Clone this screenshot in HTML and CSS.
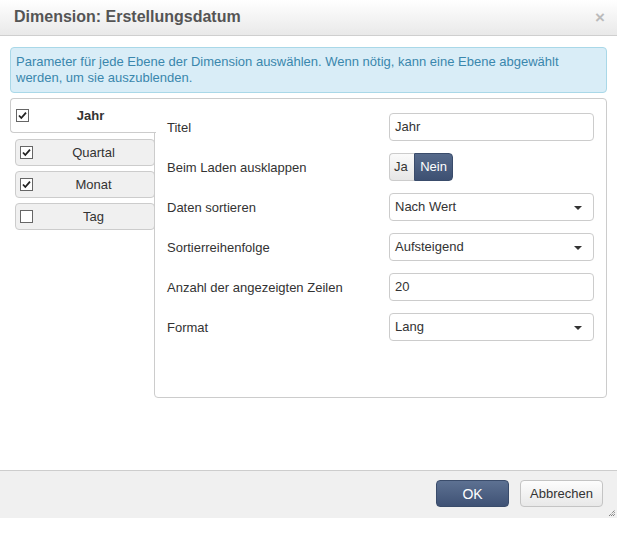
FILE: index.html
```html
<!DOCTYPE html>
<html lang="de">
<head>
<meta charset="utf-8">
<title>Dimension: Erstellungsdatum</title>
<link rel="stylesheet" href="styles.css">
</head>
<body>
<div class="dialog">
  <div class="dlg-header">
    <span class="dlg-title">Dimension: Erstellungsdatum</span>
    <span class="dlg-close">×</span>
  </div>
  <div class="dlg-body">
    <div class="info">Parameter für jede Ebene der Dimension auswählen. Wenn nötig, kann eine Ebene abgewählt werden, um sie auszublenden.</div>
    <div class="levels">
      <div class="tabs">
        <div class="tab active">
          <svg class="cb" width="13" height="13" viewBox="0 0 13 13"><rect x="0.5" y="0.5" width="12" height="12" fill="#fff" stroke="#666"/><path d="M3 6.5 L5.3 9 L10 3.6" fill="none" stroke="#222" stroke-width="1.8"/></svg>
          <span class="tab-label">Jahr</span>
        </div>
        <div class="tab">
          <svg class="cb" width="13" height="13" viewBox="0 0 13 13"><rect x="0.5" y="0.5" width="12" height="12" fill="#fff" stroke="#666"/><path d="M3 6.5 L5.3 9 L10 3.6" fill="none" stroke="#222" stroke-width="1.8"/></svg>
          <span class="tab-label">Quartal</span>
        </div>
        <div class="tab">
          <svg class="cb" width="13" height="13" viewBox="0 0 13 13"><rect x="0.5" y="0.5" width="12" height="12" fill="#fff" stroke="#666"/><path d="M3 6.5 L5.3 9 L10 3.6" fill="none" stroke="#222" stroke-width="1.8"/></svg>
          <span class="tab-label">Monat</span>
        </div>
        <div class="tab">
          <svg class="cb" width="13" height="13" viewBox="0 0 13 13"><rect x="0.5" y="0.5" width="12" height="12" fill="#fff" stroke="#666"/></svg>
          <span class="tab-label">Tag</span>
        </div>
      </div>
      <div class="panel">
        <div class="row">
          <span class="lbl">Titel</span>
          <div class="field">Jahr</div>
        </div>
        <div class="row">
          <span class="lbl">Beim Laden ausklappen</span>
          <div class="toggle"><span class="tg tg-off">Ja</span><span class="tg tg-on">Nein</span></div>
        </div>
        <div class="row">
          <span class="lbl">Daten sortieren</span>
          <div class="field select">Nach Wert<span class="caret"></span></div>
        </div>
        <div class="row">
          <span class="lbl">Sortierreihenfolge</span>
          <div class="field select">Aufsteigend<span class="caret"></span></div>
        </div>
        <div class="row">
          <span class="lbl">Anzahl der angezeigten Zeilen</span>
          <div class="field">20</div>
        </div>
        <div class="row">
          <span class="lbl">Format</span>
          <div class="field select">Lang<span class="caret"></span></div>
        </div>
      </div>
    </div>
  </div>
  <div class="dlg-footer">
    <button class="btn btn-primary">OK</button>
    <button class="btn btn-default">Abbrechen</button>
  </div>
  <svg class="grip" width="8" height="8" viewBox="0 0 8 8"><path d="M1 7 L7 1 M3 7 L7 3 M5 7 L7 5" stroke="#555" stroke-width="1" stroke-dasharray="1 1"/></svg>
</div>
</body>
</html>
```
FILE: styles.css
```css
html, body {
  margin: 0;
  padding: 0;
  background: #fff;
}
body {
  font-family: "Liberation Sans", Arial, sans-serif;
  font-size: 13px;
  color: #333;
}
.dialog {
  position: relative;
  width: 617px;
  height: 518px;
  display: flex;
  flex-direction: column;
  background: #fff;
}
.dlg-header {
  height: 36px;
  box-sizing: border-box;
  border-bottom: 1px solid #cfcfcf;
  background: linear-gradient(#ffffff, #e9e9e9);
  display: flex;
  align-items: center;
  justify-content: space-between;
  padding: 0 12px 0 14px;
}
.dlg-title {
  font-size: 16px;
  font-weight: bold;
  color: #555;
  padding-bottom: 1px;
}
.dlg-close {
  font-size: 17px;
  font-weight: bold;
  color: #bbb;
  line-height: 1;
}
.dlg-body {
  flex: 1;
  padding: 11px 10px 0 10px;
}
.info {
  background: #d9edf7;
  border: 1px solid #a9d8e8;
  border-radius: 4px;
  color: #3a87ad;
  padding: 6px 5px 6px 5px;
  line-height: 16px;
  font-size: 13px;
}
.levels {
  display: flex;
  margin-top: 5px;
}
.tabs {
  width: 145px;
  flex: none;
  display: flex;
  flex-direction: column;
  align-items: flex-end;
}
.tab {
  width: 140px;
  height: 27px;
  box-sizing: border-box;
  background: #f0f0f0;
  border: 1px solid #ccc;
  border-radius: 4px;
  display: flex;
  align-items: center;
  padding-left: 4px;
  margin-top: 5px;
}
.tab.active {
  height: 35px;
  margin-top: 0;
  margin-bottom: 1px;
  background: #fff;
  border-right: none;
  border-radius: 4px 0 0 4px;
  padding-left: 5px;
  position: relative;
  z-index: 2;
  width: 146px;
  margin-right: -1px;
}
.cb {
  flex: none;
  display: block;
}
.tab-label {
  flex: 1;
  text-align: center;
  color: #333;
}
.tab.active .tab-label {
  font-weight: bold;
  padding-right: 4px;
}
.panel {
  margin-left: -1px;
  width: 453px;
  height: 300px;
  box-sizing: border-box;
  border: 1px solid #ccc;
  border-radius: 0 4px 4px 4px;
  padding: 14px 12px 0 12px;
  display: flex;
  flex-direction: column;
  gap: 12px;
  background: #fff;
}
.row {
  display: flex;
  align-items: center;
  height: 28px;
}
.lbl {
  width: 222px;
  flex: none;
  color: #333;
}
.field {
  position: relative;
  width: 206px;
  height: 28px;
  box-sizing: border-box;
  border: 1px solid #ccc;
  border-radius: 4px;
  padding: 0 5px;
  line-height: 26px;
  color: #333;
  background: #fff;
}
.caret {
  position: absolute;
  right: 11px;
  top: 12px;
  width: 0;
  height: 0;
  border-left: 4px solid transparent;
  border-right: 4px solid transparent;
  border-top: 4px solid #333;
}
.toggle {
  display: flex;
  height: 28px;
}
.tg {
  box-sizing: border-box;
  height: 28px;
  line-height: 26px;
  padding: 0 5px;
  font-size: 13px;
}
.tg-off {
  width: 25px;
  padding: 0 0 0 4px;
  background: linear-gradient(#fafafa, #e6e6e6);
  border: 1px solid #ccc;
  border-right: none;
  border-radius: 4px 0 0 4px;
  color: #333;
}
.tg-on {
  width: 39px;
  text-align: center;
  padding: 0;
  background: linear-gradient(#566a8b, #3d5072);
  border: 1px solid #3a4c6b;
  border-radius: 0 4px 4px 0;
  color: #fff;
}
.dlg-footer {
  height: 48px;
  box-sizing: border-box;
  border-top: 1px solid #cdcdcd;
  background: #f0f0f0;
  display: flex;
  align-items: center;
  justify-content: flex-end;
  gap: 11px;
  padding: 0 14px 2px 0;
}
.btn {
  height: 27px;
  box-sizing: border-box;
  border-radius: 4px;
  font-family: "Liberation Sans", Arial, sans-serif;
  font-size: 13px;
  padding: 0;
  margin: 0;
}
.btn-primary {
  width: 73px;
  color: #fff;
  background: linear-gradient(#5d7192, #3f5275);
  border: 1px solid #3a4c6b;
  font-size: 14px;
}
.btn-default {
  width: 83px;
  color: #333;
  background: linear-gradient(#fdfdfd, #e8e8e8);
  border: 1px solid #c4c4c4;
}
.grip {
  position: absolute;
  right: 1px;
  bottom: 1px;
}
```
